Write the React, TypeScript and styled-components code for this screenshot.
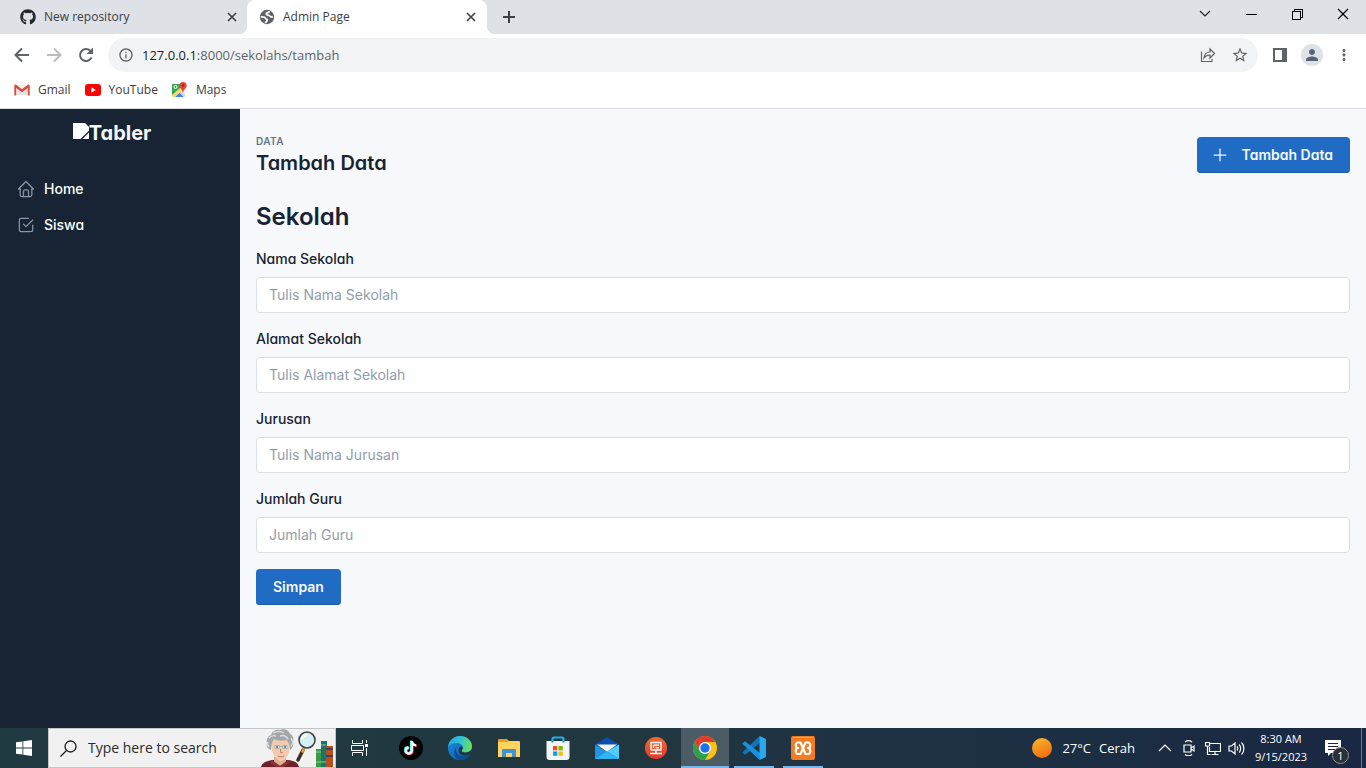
import React from "react";
import styled, { createGlobalStyle, css } from "styled-components";
import { VscChromeClose, VscChromeMinimize, VscChromeRestore } from "react-icons/vsc";
import { FaGithub } from "react-icons/fa";
import { MdInfoOutline, MdStarBorder, MdPerson, MdMoreVert } from "react-icons/md";

const systemFont = `"Open Sans", "Noto Sans", sans-serif`;
const pageFont = `Inter, "Liberation Sans", sans-serif`;

const GlobalStyle = createGlobalStyle`
  *, *::before, *::after { box-sizing: border-box; }
  body { margin: 0; font-family: ${pageFont}; font-size: 14px; line-height: 20px; color: #182433; }
  button { font: inherit; border: 0; padding: 0; margin: 0; background: none; color: inherit; cursor: pointer; }
  a { color: inherit; text-decoration: none; }
  svg { display: block; flex: none; }
  h1, h2, p { margin: 0; }
`;

const Screen = styled.div`
  display: flex;
  flex-direction: column;
  min-height: 100vh;
`;

/* ---------- Browser window ---------- */

const TabStrip = styled.header`
  display: flex;
  height: 34px;
  padding-left: 8px;
  background: #dee1e6;
  font-family: ${systemFont};
  font-size: 12px;
  line-height: 16px;
  color: #3c4043;
`;

const Tab = styled.div<{ $active?: boolean }>`
  position: relative;
  display: flex;
  align-items: center;
  gap: 8px;
  width: 240px;
  padding: 0 8px 0 12px;
  border-radius: 8px 8px 0 0;
  background: ${(p) => (p.$active ? "#fff" : "transparent")};
  margin-left: ${(p) => (p.$active ? "-1px" : "0")};
  ${(p) =>
    p.$active &&
    css`
      &::before,
      &::after {
        content: "";
        position: absolute;
        bottom: 0;
        width: 8px;
        height: 8px;
      }
      &::before {
        left: -8px;
        background: radial-gradient(circle at 0 0, transparent 8px, #fff 8px);
      }
      &::after {
        right: -8px;
        background: radial-gradient(circle at 100% 0, transparent 8px, #fff 8px);
      }
    `}
`;

const TabTitle = styled.span`
  flex: 1;
  white-space: nowrap;
`;

const IconButton = styled.button<{ $size?: number; $tone?: string }>`
  display: flex;
  align-items: center;
  justify-content: center;
  flex: none;
  width: ${(p) => p.$size ?? 32}px;
  height: ${(p) => p.$size ?? 32}px;
  color: ${(p) => p.$tone ?? "#5f6368"};
`;

const NewTabButton = styled(IconButton)`
  height: 34px;
  margin-left: 6px;
`;

const WindowControls = styled.div`
  display: flex;
  margin-left: auto;
  color: #000;
`;

const WindowButton = styled.button`
  display: flex;
  align-items: center;
  justify-content: center;
  width: 46px;
  height: 28px;
`;

const Toolbar = styled.div`
  display: flex;
  align-items: center;
  height: 42px;
  padding: 0 6px;
  background: #fff;
`;

const Omnibox = styled.div`
  display: flex;
  align-items: center;
  flex: 1;
  height: 34px;
  margin: 0 6px;
  padding: 0 2px 0 10px;
  gap: 8px;
  border-radius: 17px;
  background: #f1f3f4;
  color: #5f6368;
`;

const AddressText = styled.div`
  flex: 1;
  font-family: ${systemFont};
  font-size: 13px;
  line-height: 20px;
  white-space: nowrap;
`;

const AddressHost = styled.span`
  color: #202124;
`;

const OmniboxActions = styled.div`
  display: flex;
`;

const Avatar = styled.span`
  display: flex;
  align-items: center;
  justify-content: center;
  width: 22px;
  height: 22px;
  border-radius: 50%;
  background: #dee1e6;
  color: #56617a;
`;

const BookmarksBar = styled.nav`
  display: flex;
  align-items: center;
  gap: 14px;
  height: 33px;
  padding: 0 14px 4px;
  border-bottom: 1px solid #dadce0;
  background: #fff;
  font-family: ${systemFont};
  font-size: 12px;
  line-height: 16px;
  color: #3c4043;
`;

const Bookmark = styled.a`
  display: flex;
  align-items: center;
  gap: 8px;
`;

/* ---------- Admin page ---------- */

const Page = styled.div`
  display: flex;
  flex: 1;
  background: #f6f8fc;
  font-feature-settings: "cv03", "cv04", "cv11";
`;

const Sidebar = styled.aside`
  flex: none;
  width: 240px;
  background: #182433;
  color: #fff;
`;

const Brand = styled.a`
  display: flex;
  justify-content: center;
  padding: 12px 16px 26px 0;
  font-size: 20px;
  font-weight: 700;
  line-height: 24px;
  color: #f4f6fa;
`;

const BrandImage = styled.svg`
  margin-top: 2px;
`;

const NavItem = styled.a`
  display: flex;
  align-items: center;
  gap: 8px;
  height: 36px;
  padding: 0 16px;
  font-weight: 500;
  color: #fff;
  svg {
    color: #8b95a5;
  }
`;

const Main = styled.main`
  flex: 1;
  min-width: 0;
  padding: 24px 16px;
`;

const PageHeader = styled.div`
  display: flex;
  align-items: center;
  justify-content: space-between;
  margin-bottom: 24px;
`;

const Pretitle = styled.p`
  font-size: 10px;
  font-weight: 600;
  line-height: 16px;
  letter-spacing: 0.04em;
  text-transform: uppercase;
  color: #667382;
`;

const PageTitle = styled.h1`
  font-size: 20px;
  font-weight: 600;
  line-height: 28px;
`;

const SectionTitle = styled.h2`
  margin-bottom: 16px;
  font-size: 24px;
  font-weight: 600;
  line-height: 32px;
`;

const primaryButton = css`
  display: inline-flex;
  align-items: center;
  height: 36px;
  padding: 0 17px;
  border-radius: 4px;
  background: #206bc4;
  box-shadow: inset 0 -1px 0 #1b5cab;
  color: #f6f8fb;
  font-weight: 600;
`;

const ButtonLink = styled.a`
  ${primaryButton}
  gap: 12px;
  padding-left: 13px;
`;

const SubmitButton = styled.button`
  ${primaryButton}
  font-feature-settings: normal;
`;

const Field = styled.div`
  margin-bottom: 16px;
`;

const Label = styled.label`
  display: block;
  margin-bottom: 8px;
  font-weight: 500;
`;

const TextInput = styled.input`
  display: block;
  width: 100%;
  height: 36px;
  padding: 0 12px 2px;
  border: 1px solid #dadfe5;
  border-radius: 4px;
  background: #fff;
  font: inherit;
  font-feature-settings: normal;
  color: inherit;
  &::placeholder {
    color: #929dab;
    opacity: 1;
  }
`;

/* ---------- Windows taskbar ---------- */

const Taskbar = styled.footer`
  display: flex;
  height: 40px;
  background: linear-gradient(90deg, #203a42 0%, #21373f 45%, #1e3145 65%, #1c2f42 78%, #1a2742 100%);
  color: #fff;
  font-family: ${systemFont};
`;

const TaskButton = styled.button<{ $open?: boolean; $active?: boolean }>`
  position: relative;
  display: flex;
  align-items: center;
  justify-content: center;
  flex: none;
  width: 48px;
  height: 40px;
  background: ${(p) => (p.$active ? "#4c5c67" : "transparent")};
  ${(p) =>
    p.$open &&
    css`
      &::after {
        content: "";
        position: absolute;
        bottom: 0;
        left: ${p.$active ? 0 : 4}px;
        right: ${p.$active ? 0 : 4}px;
        height: 2px;
        background: #76b9ed;
      }
    `}
`;

const SearchBox = styled.label`
  display: flex;
  align-items: center;
  flex: none;
  width: 288px;
  padding: 0 0 0 11px;
  border: 1px solid #c3c6c8;
  background: #f1f1f1;
  color: #1f1f1f;
`;

const SearchInput = styled.input`
  flex: 1;
  min-width: 0;
  margin-left: 11px;
  padding: 0;
  border: 0;
  outline: 0;
  background: none;
  font-family: ${systemFont};
  font-size: 14px;
  line-height: 20px;
  &::placeholder {
    color: #2b2b2b;
    opacity: 1;
  }
`;

const PinnedApps = styled.div`
  display: flex;
  gap: 1px;
  margin-left: 3px;
`;

const Tray = styled.div`
  display: flex;
  align-items: center;
  margin-left: auto;
`;

const Weather = styled.button`
  display: flex;
  align-items: center;
  gap: 8px;
  margin-right: 18px;
  font-size: 13px;
  line-height: 20px;
`;

const SunDot = styled.span`
  width: 20px;
  height: 20px;
  margin-right: 2px;
  border-radius: 50%;
  background: linear-gradient(160deg, #f9b82c, #f0640c);
`;

const Clock = styled.button`
  width: 64px;
  font-size: 11px;
  line-height: 18px;
  text-align: center;
  white-space: nowrap;
`;

const Notifications = styled.button`
  position: relative;
  display: flex;
  align-items: center;
  width: 48px;
  height: 40px;
  padding-left: 12px;
`;

const Badge = styled.span`
  position: absolute;
  left: 19px;
  top: 19px;
  width: 17px;
  height: 17px;
  border: 1px solid #8b9097;
  border-radius: 50%;
  background: #2c3036;
  font-size: 11px;
  line-height: 15px;
  text-align: center;
`;

const ShowDesktop = styled.button`
  width: 5px;
  height: 40px;
  border-left: 1px solid #6d7789;
`;

/* ---------- Drawings ---------- */

const CloseGlyph = () => (
  <svg width="16" height="16" viewBox="0 0 16 16" stroke="#3c4043" strokeWidth="1.6">
    <path d="M4 4l8 8M12 4l-8 8" />
  </svg>
);

const PlusGlyph = () => (
  <svg width="16" height="16" viewBox="0 0 16 16" stroke="#3c4043" strokeWidth="2">
    <path d="M8 2v12M2 8h12" />
  </svg>
);

const ArrowGlyph = ({ flip }: { flip?: boolean }) => (
  <svg width="16" height="16" viewBox="0 0 16 16" fill="none" stroke="currentColor" strokeWidth="2">
    <path d={flip ? "M1 8h13M8 1.500L14.500 8 8 14.500" : "M15 8H2M8 1.500L1.500 8 8 14.500"} />
  </svg>
);

const ReloadGlyph = () => (
  <svg width="16" height="16" viewBox="0 0 16 16">
    <path d="M13.500 10.500A6 6 0 1 1 12.300 3.800" fill="none" stroke="currentColor" strokeWidth="2" />
    <path d="M15 0.500V7H8.500z" fill="currentColor" />
  </svg>
);

const GlobeGlyph = () => (
  <svg width="16" height="16" viewBox="0 0 16 16">
    <circle cx="8" cy="8" r="7.200" fill="#5f6368" />
    <path
      d="M10.500 2.200c-.5 1.800-3.500 1-3.300 2.800.2 1.500 3.600.6 3.900 2.300.2 1 2.300.6 2.800.5M1.800 7.800c2 0 4.200-.2 4.500 1.200.3 1.200 2 .8 2 2s-1.500 1.300-1.800 3"
      fill="none"
      stroke="#fff"
      strokeWidth="1.700"
    />
  </svg>
);

const ShareGlyph = () => (
  <svg width="18" height="18" viewBox="0 0 18 18" fill="none" stroke="currentColor" strokeWidth="1.2">
    <path d="M2.500 5.500v10h10.500V13" />
    <path d="M5 12c.4-4 2.500-6 6-6V3l4.500 4.500L11 12V9C8.500 9 6.500 10 5 12z" />
  </svg>
);

const SidePanelGlyph = () => (
  <svg width="14" height="14" viewBox="0 0 14 14">
    <path fill="#5f6368" fillRule="evenodd" d="M0 0h14v14H0zM2 2v10h7V2z" />
  </svg>
);

const GmailGlyph = () => (
  <svg width="16" height="16" viewBox="0 0 16 16">
    <path d="M1 3h14v10H1z" fill="#f2f2f2" />
    <path d="M3 13V6l5 4 5-4v7" fill="#e3e3e3" />
    <path d="M.3 3.600C.3 2.600 1.500 2.200 2.200 2.800L8 7.300l5.800-4.500c.7-.6 1.900-.2 1.900.8V13.500H13.800V6L8 10.200 2.200 6v7.500H.3z" fill="#dd4b3e" />
  </svg>
);

const YouTubeGlyph = () => (
  <svg width="16" height="16" viewBox="0 0 16 16">
    <rect x="0" y="2" width="16" height="12" rx="3" fill="#f00" />
    <path d="M6.400 5.300v5.400L10.800 8z" fill="#fff" />
  </svg>
);

const MapsGlyph = () => (
  <svg width="16" height="16" viewBox="0 0 16 16">
    <rect x="0" y="2" width="13" height="13" rx="1" fill="#e8eaed" />
    <path d="M0 3a1 1 0 0 1 1-1h8v5L0 14z" fill="#34a853" />
    <path d="M3 15l4.500-4.500L12 15z" fill="#4285f4" />
    <path d="M0 13L9 5l2 2-8 8H1l-1-1z" fill="#fdd663" />
    <path d="M7.500 10.500L9.500 8.500l3.500 4V14l-1 1z" fill="#d5d9de" />
    <circle cx="3.500" cy="5" r="1.500" fill="none" stroke="#fff" />
    <path d="M11 0A3.700 3.700 0 0 0 7.300 3.500C7.300 6 10.500 7 11 11c.5-4 3.700-5 3.700-7.500A3.700 3.700 0 0 0 11 0z" fill="#ea4335" />
    <circle cx="11" cy="3.500" r="1.200" fill="#8c2b22" />
  </svg>
);

const TablerIcon = ({ paths }: { paths: string[] }) => (
  <svg width="20" height="20" viewBox="0 0 24 24" fill="none" stroke="currentColor" strokeWidth="1.500" strokeLinecap="round" strokeLinejoin="round">
    {paths.map((d) => (
      <path key={d} d={d} />
    ))}
  </svg>
);

const homePaths = [
  "M5 12H3l9-9 9 9h-2",
  "M5 12v7a2 2 0 0 0 2 2h10a2 2 0 0 0 2-2v-7",
  "M9 21v-6a2 2 0 0 1 2-2h2a2 2 0 0 1 2 2v6",
];
const checkPaths = ["M9 11l3 3 8-8", "M20 12v6a2 2 0 0 1-2 2H6a2 2 0 0 1-2-2V6a2 2 0 0 1 2-2h9"];
const plusPaths = ["M12 5v14", "M5 12h14"];

const StartGlyph = () => (
  <svg width="16" height="16" viewBox="0 0 16 16" fill="#fff">
    <path d="M0 2.300L6.500 1.400v6.200H0zM7.300 1.300L16 0v7.600H7.300zM0 8.400h6.500v6.200L0 13.700zM7.300 8.400H16V16l-8.700-1.300z" />
  </svg>
);

const SearchGlyph = () => (
  <svg width="17" height="17" viewBox="0 0 17 17" fill="none" stroke="#1c1c1c" strokeWidth="1.300">
    <circle cx="10.500" cy="6.500" r="5.500" />
    <path d="M6.500 10.500L.5 16.500" />
  </svg>
);

const SearchArt = () => (
  <svg width="75" height="38" viewBox="0 0 75 38">
    <path d="M1 38c1-4 5-6 11-7h17c6 1 9 3 10 7z" fill="#6b2229" />
    <path d="M14 28h12v5l-6 4-6-4z" fill="#e3ac8c" />
    <path d="M12 31l8 6 8-6 2 2-6 5h-8l-6-4z" fill="#8a3239" />
    <path d="M11 15c0-7 4-10 10-10s9 3 9 10c0 9-4 17-9 17s-10-8-10-17z" fill="#f2cbae" />
    <path d="M11 21c-4-1-5-4-4-7-1-4 1-7 4-8 1-4 5-6 9-5 5-2 9 1 10 4 3 1 4 5 3 8 1 4-1 7-3 8 0-5-1-8-4-10-4 1-9 1-12-1-2 3-3 6-3 11z" fill="#a3a7aa" />
    <path d="M9 9c2-2 4-3 7-2M13 4c4-2 8-2 11 0M20 7c3-1 6 0 8 3M8 13c-1 2 0 4 1 5M31 9c2 3 2 6 0 8" fill="none" stroke="#dadddf" strokeWidth="1.400" />
    <path d="M15 16.500h4v3h-4zM23 16.500h4v3h-4zM19 17.500h4" fill="#e4eef2" stroke="#95a1a8" strokeWidth=".7" />
    <circle cx="17" cy="18" r="1" fill="#416f91" />
    <circle cx="25" cy="18" r="1" fill="#416f91" />
    <path d="M20.500 20v3.500h2M18 27c2 1 4 1 6 0" fill="none" stroke="#c07d65" />
    <path d="M43 21l-5 10" stroke="#3d2b27" strokeWidth="3.500" strokeLinecap="round" />
    <path d="M44.500 18.500l-2.500 5" stroke="#e2a234" strokeWidth="2.500" />
    <circle cx="47" cy="11" r="8" fill="#d3f0f4" stroke="#3f4347" strokeWidth="1.600" />
    <path d="M42 10c1-3 3-4 5-4" fill="none" stroke="#fff" strokeWidth="2" />
    <path d="M56 20h6v18h-6z" fill="#3b9845" />
    <path d="M61 12h6v26h-6z" fill="#18756f" />
    <path d="M66 17h7v21h-7z" fill="#b4521f" />
    <path d="M56 23h5M56 33h5M61 16h5M61 33h5" stroke="#8fd082" />
    <path d="M66 20h7M66 27h7" stroke="#4b3f55" strokeWidth="2" />
  </svg>
);

const TaskViewGlyph = () => (
  <svg width="18" height="16" viewBox="0 0 18 16" fill="none" stroke="#fff" strokeWidth="1">
    <path d="M1.500 0v3.500h10V0M1.500 16v-3.500h10V16M.5 5.500h12v5H.5zM15.500 0v3M15.500 8v8" />
    <path d="M14 4h3v3h-3z" fill="#fff" stroke="none" />
  </svg>
);

const TikTokGlyph = () => {
  const note = "M13 5v9.500a3 3 0 1 1-3-3M13 5c.3 2.800 1.800 4 4.300 4.200";
  return (
    <svg width="24" height="24" viewBox="0 0 24 24" fill="none" strokeWidth="2.200">
      <circle cx="12" cy="12" r="12" fill="#000" />
      <path d={note} stroke="#25f4ee" transform="translate(-1 -.4)" />
      <path d={note} stroke="#fe2c55" transform="translate(.6 .6)" />
      <path d={note} stroke="#fff" transform="translate(-.2 .1)" />
    </svg>
  );
};

const EdgeGlyph = () => (
  <svg width="24" height="24" viewBox="0 0 24 24">
    <defs>
      <linearGradient id="edgeTop" x1="0" y1=".3" x2="1" y2=".5">
        <stop offset="0" stopColor="#2aa7e0" />
        <stop offset=".5" stopColor="#2fc2d2" />
        <stop offset="1" stopColor="#6be25b" />
      </linearGradient>
      <linearGradient id="edgeBody" x1="0" y1="0" x2="1" y2="1">
        <stop offset="0" stopColor="#1c8bdc" />
        <stop offset="1" stopColor="#0f5aa8" />
      </linearGradient>
    </defs>
    <circle cx="12" cy="12" r="12" fill="url(#edgeBody)" />
    <path d="M0 11C1 4 6 0 12 0c7 0 12 5 12 10 0 4-3 6.500-6.500 6.500-3 0-4.500-1-3.500-2.500 2.500-3-.5-7-5-7C5 7 1.500 8.500 0 11z" fill="url(#edgeTop)" />
    <path d="M9 10c-3 4 0 10 6 10 3 0 5-.7 7.500-2-2 4-6 6-10.500 6-6-1-8-9-3-14z" fill="#0d4f94" />
    <path d="M14 14c-1 1.500.5 2.500 3.500 2.500 2 0 4-.7 5.300-2.200L24 16l-1.500 2c-5 3-12 2-12-4 0-2 1.500-3.500 3-3.500 1.500 1 1.500 2.500.5 3.500z" fill="#203a42" />
  </svg>
);

const FolderGlyph = () => (
  <svg width="22" height="20" viewBox="0 0 22 20">
    <path d="M0 2a1 1 0 0 1 1-1h8l2 2v3H0z" fill="#e5a21a" />
    <path d="M0 4h9l1-1h11a1 1 0 0 1 1 1v15H0z" fill="#ffd35e" />
    <path d="M4 19v-7a1 1 0 0 1 1-1h12a1 1 0 0 1 1 1v7h-4v-4H8v4z" fill="#3f91d8" />
  </svg>
);

const StoreGlyph = () => (
  <svg width="24" height="24" viewBox="0 0 24 24">
    <path d="M6.500 6V3a1.500 1.500 0 0 1 1.500-1.500h8A1.500 1.500 0 0 1 17.500 3v3" fill="none" stroke="#22b2e8" strokeWidth="2.200" />
    <path d="M.5 5h23V21a3 3 0 0 1-3 3h-17a3 3 0 0 1-3-3z" fill="#f2f4f5" />
    <path d="M6.500 5v1.500M17.500 5v1.500" stroke="#1a8fc4" strokeWidth="2" />
    <path d="M7 10h4.300v4.300H7z" fill="#f25022" />
    <path d="M12.500 10h4.300v4.300h-4.300z" fill="#7fba00" />
    <path d="M7 15.500h4.300v4.300H7z" fill="#00a4ef" />
    <path d="M12.500 15.500h4.300v4.300h-4.300z" fill="#ffb900" />
  </svg>
);

const MailGlyph = () => (
  <svg width="24" height="24" viewBox="0 0 24 24">
    <path d="M0 8.500L12 1l12 7.500V12H0z" fill="#0d4fae" />
    <path d="M2 8.500h20L12 16z" fill="#f1f5f8" />
    <path d="M0 8.500L24 23H0z" fill="#1f95e4" />
    <path d="M24 8.500V23L12 15.500z" fill="#50cdf8" />
    <path d="M0 23l12-7.500L24 23z" fill="#30b5f3" />
  </svg>
);

const RedDeskGlyph = () => (
  <svg width="22" height="22" viewBox="0 0 22 22" fill="none" stroke="#fff" strokeWidth="1.400">
    <defs>
      <linearGradient id="desk" x1="0" y1="0" x2="0" y2="1">
        <stop offset="0" stopColor="#f26a30" />
        <stop offset="1" stopColor="#e23a2c" />
      </linearGradient>
    </defs>
    <circle cx="11" cy="11" r="11" fill="url(#desk)" stroke="none" />
    <path d="M6 13V5.500h10V13H6M8.500 8.200h5.500M8.500 8v3M10.500 10.700H14M11 13v3M5 16.500h12" />
  </svg>
);

const ChromeGlyph = () => (
  <svg width="24" height="24" viewBox="0 0 24 24">
    <circle cx="12" cy="12" r="12" fill="#fbc116" />
    <path d="M1.600 6A12 12 0 0 1 22.400 6H12L6.800 15z" fill="#e33b2e" />
    <path d="M1.600 6a12 12 0 0 0 10.400 18l5.200-9H6.800z" fill="#2ba14b" />
    <circle cx="12" cy="12" r="6" fill="#fff" />
    <circle cx="12" cy="12" r="4.700" fill="#1a73e8" />
  </svg>
);

const VsCodeGlyph = () => (
  <svg width="24" height="24" viewBox="0 0 24 24">
    <path d="M17.500 0L18 7 3 18.800.2 16.600z" fill="#1273bb" />
    <path d="M.2 7.400L3 5.200 18 17l-.5 7z" fill="#1c8fdb" />
    <path d="M17.500 0L24 3v18l-6.500 3z" fill="#2ba9ee" />
  </svg>
);

const XamppGlyph = () => (
  <svg width="24" height="24" viewBox="0 0 24 24" fill="none" stroke="#fff" strokeWidth="2.200" strokeLinejoin="round" strokeLinecap="round">
    <rect width="24" height="24" rx="2" fill="#f47b20" stroke="none" />
    <path d="M2 1.500h20" stroke="#f8a667" strokeWidth="1" />
    <path d="M7 12c-3 0-3-5.500 0-5.500h2.500L14.500 18H17c3 0 3-6 0-6" />
    <path d="M17 12c3 0 3-5.500 0-5.500h-2.500L9.500 18H7c-3 0-3-6 0-6" />
  </svg>
);

const TrayGlyph = ({ d, size = 16 }: { d: string; size?: number }) => (
  <svg width={size} height="16" viewBox={`0 0 ${size} 16`} fill="none" stroke="#fff" strokeWidth="1.200">
    <path d={d} />
  </svg>
);

const NoteGlyph = () => (
  <svg width="16" height="16" viewBox="0 0 16 16">
    <path d="M0 0h16v13H6l-3 3v-3H0z" fill="#fff" />
    <path d="M3 3.500h10M3 6.500h10M3 9.500h7" stroke="#1a2742" />
  </svg>
);

/* ---------- Data ---------- */

const fields = [
  { id: "nama", label: "Nama Sekolah", placeholder: "Tulis Nama Sekolah" },
  { id: "alamat", label: "Alamat Sekolah", placeholder: "Tulis Alamat Sekolah" },
  { id: "jurusan", label: "Jurusan", placeholder: "Tulis Nama Jurusan" },
  { id: "guru", label: "Jumlah Guru", placeholder: "Jumlah Guru" },
];

const bookmarks = [
  { name: "Gmail", icon: <GmailGlyph /> },
  { name: "YouTube", icon: <YouTubeGlyph /> },
  { name: "Maps", icon: <MapsGlyph /> },
];

const apps = [
  { name: "TikTok", icon: <TikTokGlyph /> },
  { name: "Edge", icon: <EdgeGlyph /> },
  { name: "File Explorer", icon: <FolderGlyph /> },
  { name: "Store", icon: <StoreGlyph /> },
  { name: "Mail", icon: <MailGlyph /> },
  { name: "Desk", icon: <RedDeskGlyph /> },
  { name: "Chrome", icon: <ChromeGlyph />, open: true, active: true },
  { name: "VS Code", icon: <VsCodeGlyph />, open: true },
  { name: "XAMPP", icon: <XamppGlyph />, open: true },
];

export default function App() {
  return (
    <Screen>
      <GlobalStyle />
      <TabStrip>
        <Tab>
          <FaGithub size={16} color="#24292f" />
          <TabTitle>New repository</TabTitle>
          <IconButton $size={16} aria-label="Close tab"><CloseGlyph /></IconButton>
        </Tab>
        <Tab $active>
          <GlobeGlyph />
          <TabTitle>Admin Page</TabTitle>
          <IconButton $size={16} aria-label="Close tab"><CloseGlyph /></IconButton>
        </Tab>
        <NewTabButton aria-label="New tab"><PlusGlyph /></NewTabButton>
        <WindowControls>
          <WindowButton aria-label="Search tabs">
            <svg width="12" height="8" viewBox="0 0 12 8" fill="none" stroke="#222" strokeWidth="1.200">
              <path d="M1 1l5 5 5-5" />
            </svg>
          </WindowButton>
          <WindowButton aria-label="Minimize"><VscChromeMinimize size={16} /></WindowButton>
          <WindowButton aria-label="Restore"><VscChromeRestore size={16} /></WindowButton>
          <WindowButton aria-label="Close"><VscChromeClose size={16} /></WindowButton>
        </WindowControls>
      </TabStrip>

      <Toolbar>
        <IconButton aria-label="Back"><ArrowGlyph /></IconButton>
        <IconButton aria-label="Forward" $tone="#babcbe"><ArrowGlyph flip /></IconButton>
        <IconButton aria-label="Reload"><ReloadGlyph /></IconButton>
        <Omnibox>
          <MdInfoOutline size={16} />
          <AddressText><AddressHost>127.0.0.1</AddressHost>:8000/sekolahs/tambah</AddressText>
          <OmniboxActions>
            <IconButton aria-label="Share"><ShareGlyph /></IconButton>
            <IconButton aria-label="Bookmark this tab"><MdStarBorder size={18} /></IconButton>
          </OmniboxActions>
        </Omnibox>
        <IconButton aria-label="Side panel"><SidePanelGlyph /></IconButton>
        <IconButton aria-label="Profile"><Avatar><MdPerson size={18} /></Avatar></IconButton>
        <IconButton aria-label="Menu"><MdMoreVert size={18} /></IconButton>
      </Toolbar>

      <BookmarksBar>
        {bookmarks.map((b) => (
          <Bookmark key={b.name} href="#">{b.icon}{b.name}</Bookmark>
        ))}
      </BookmarksBar>

      <Page>
        <Sidebar>
          <Brand href="#">
            <BrandImage width="16" height="16" viewBox="0 0 16 16" fill="#fff">
              <path d="M0 0h12l4 4v3.500L7.500 16H0zM9.500 16l6.500-6.500V16z" />
            </BrandImage>
            Tabler
          </Brand>
          <nav>
            <NavItem href="#"><TablerIcon paths={homePaths} />Home</NavItem>
            <NavItem href="#"><TablerIcon paths={checkPaths} />Siswa</NavItem>
          </nav>
        </Sidebar>
        <Main>
          <PageHeader>
            <div>
              <Pretitle>Data</Pretitle>
              <PageTitle>Tambah Data</PageTitle>
            </div>
            <ButtonLink href="#"><TablerIcon paths={plusPaths} />Tambah Data</ButtonLink>
          </PageHeader>
          <SectionTitle>Sekolah</SectionTitle>
          <form onSubmit={(e) => e.preventDefault()}>
            {fields.map((f) => (
              <Field key={f.id}>
                <Label htmlFor={f.id}>{f.label}</Label>
                <TextInput id={f.id} type="text" placeholder={f.placeholder} />
              </Field>
            ))}
            <SubmitButton type="submit">Simpan</SubmitButton>
          </form>
        </Main>
      </Page>

      <Taskbar>
        <TaskButton aria-label="Start"><StartGlyph /></TaskButton>
        <SearchBox>
          <SearchGlyph />
          <SearchInput type="text" placeholder="Type here to search" aria-label="Search" />
          <SearchArt />
        </SearchBox>
        <TaskButton aria-label="Task view"><TaskViewGlyph /></TaskButton>
        <PinnedApps>
          {apps.map((a) => (
            <TaskButton key={a.name} aria-label={a.name} $open={a.open} $active={a.active}>{a.icon}</TaskButton>
          ))}
        </PinnedApps>
        <Tray>
          <Weather><SunDot /><span>27°C</span><span>Cerah</span></Weather>
          <IconButton $size={24} aria-label="Show hidden icons"><TrayGlyph d="M2 11l6-6 6 6" /></IconButton>
          <IconButton $size={24} aria-label="Meet now"><TrayGlyph d="M3 5h7v7H3zM10 8l3-2v5l-3-2M4 2c2-1.500 5-1.500 7 0M4 14.500c2 1.500 5 1.500 7 0" /></IconButton>
          <IconButton $size={24} aria-label="Network"><TrayGlyph d="M5 3.500h10.500v8H4.500V7M.5 2.500h4V6h-4zM2.500 6v8.500h3M10 11.500v3M6.500 14.500h7" /></IconButton>
          <IconButton $size={24} aria-label="Volume"><TrayGlyph size={18} d="M1 6h2.500l3.500-3v11l-3.500-3H1zM9 6.500c1 1 1 3 0 4M11 4.500c2.200 2 2.200 6 0 8M13.500 2.500c3.200 3 3.200 9 0 12" /></IconButton>
          <Clock>8:30 AM<br />9/15/2023</Clock>
          <Notifications aria-label="Notifications"><NoteGlyph /><Badge>1</Badge></Notifications>
          <ShowDesktop aria-label="Show desktop" />
        </Tray>
      </Taskbar>
    </Screen>
  );
}
